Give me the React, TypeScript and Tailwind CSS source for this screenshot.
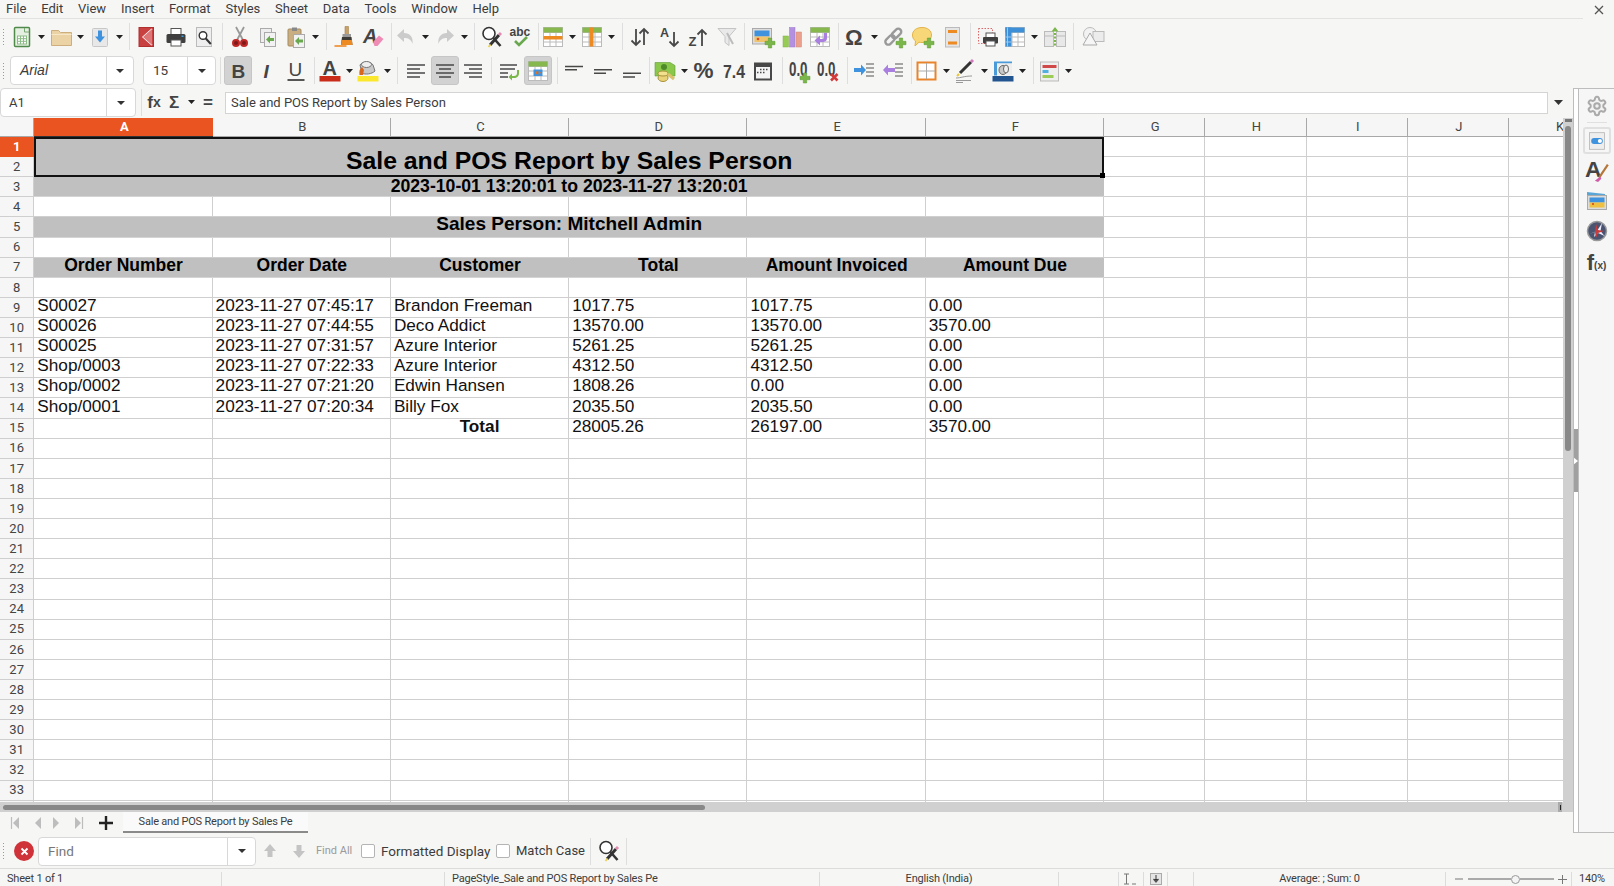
import React from "react";

const Svg = ({ children, s = 24 }: { children: React.ReactNode; s?: number }) => (
  <svg className="overflow-visible" width={s} height={s} viewBox="0 0 24 24" fill="none">{children}</svg>
);
const T = ({ x, y, size, children, fill = "#444", weight = 700, italic, len }: { x: number; y: number; size: number; children: React.ReactNode; fill?: string; weight?: number; italic?: boolean; len?: number }) => (
  <text x={x} y={y} fontSize={size} fill={fill} fontWeight={weight} fontStyle={italic ? "italic" : "normal"} fontFamily="'Liberation Sans', sans-serif" textLength={len} lengthAdjust={len ? "spacingAndGlyphs" : undefined}>{children}</text>
);
const Plus = ({ x = 18, y = 18 }: { x?: number; y?: number }) => (
  <path d={`M${x - 1.7} ${y - 5}h3.4v3.3h3.3v3.4h-3.3v3.3h-3.4v-3.3h-3.3v-3.4h3.3z`} fill="#7ab648" stroke="#5f9a35" strokeWidth=".5" />
);
const GreenArrow = ({ x = 10, y = 15 }: { x?: number; y?: number }) => (
  <path d={`M${x} ${y}l4-4v2.5h4v3h-4v2.5z`} fill="#6aa84f" />
);
const Table = ({ fill = "#fff" }: { fill?: string }) => (
  <>
    <rect x="2.5" y="2.5" width="19" height="19" fill={fill} stroke="#bbb" />
    <path d="M2.5 7.5h19M2.5 12h19M2.5 17h19M9 2.5v19M15 2.5v19" stroke="#bbb" />
  </>
);

const Icons: Record<string, React.ReactNode> = {
  doc: <Svg><rect x="4.5" y="2.5" width="15" height="19" rx="1" fill="#e6f0e2" stroke="#4f8a4a" strokeWidth="1.5" /><path d="M14.5 3v4h4.5" stroke="#7aa874" /><rect x="7.5" y="11" width="9" height="8" fill="#fff" stroke="#8cbb86" /><path d="M7.5 13.7h9M7.5 16.3h9M10.5 11v8M13.5 11v8" stroke="#8cbb86" /></Svg>,
  folder: <Svg><path d="M2.5 5.5h7l2 2h11v13h-20z" fill="#ecd3a6" stroke="#cdae7c" /><path d="M2.5 9.5h20" stroke="#f6e7c8" /></Svg>,
  save: <Svg><rect x="4.5" y="3.5" width="15" height="18" rx="1" fill="#e8e8e8" stroke="#c8c8c8" /><path d="M10 5.5h4v6h3l-5 6-5-6h3z" fill="#3f92dd" /></Svg>,
  pdf: <Svg><rect x="5" y="2.5" width="14.5" height="19" fill="#c94040" stroke="#b03030" /><path d="M18 4L9 12l9 8" stroke="#fff" strokeWidth="1.4" /><path d="M9 12l9-8v16z" fill="#dd7777" /></Svg>,
  print: <Svg><rect x="7" y="3.5" width="10" height="7" fill="#fff" stroke="#555" /><rect x="2.5" y="9" width="19" height="9" rx="1.5" fill="#3f3f3f" /><rect x="7" y="15" width="10" height="6" fill="#fff" stroke="#555" /><rect x="17.5" y="10.5" width="2" height="1.5" fill="#3f9bdc" /></Svg>,
  preview: <Svg><rect x="4.5" y="2.5" width="15" height="19" fill="#eee" stroke="#bbb" /><circle cx="11" cy="10.5" r="3.8" fill="#fff" stroke="#333" strokeWidth="1.4" /><path d="M13.8 13.5l5 5.5" stroke="#333" strokeWidth="2" /></Svg>,
  cut: <Svg><path d="M9 15L16 2M15 15L8 2" stroke="#999" strokeWidth="1.8" /><circle cx="8" cy="18" r="3" fill="#7c1a1a" stroke="#c02828" strokeWidth="2" /><circle cx="16" cy="18" r="3" fill="#7c1a1a" stroke="#c02828" strokeWidth="2" /></Svg>,
  copy: <Svg><rect x="4.5" y="3.5" width="11" height="14" fill="#eee" stroke="#aaa" /><rect x="8.5" y="7.5" width="11" height="14" fill="#f2f2f2" stroke="#aaa" /><GreenArrow x={10} y={14.5} /></Svg>,
  paste: <Svg><rect x="4" y="4" width="13" height="17" rx="1" fill="#c9ae82" stroke="#a58b5f" /><rect x="8" y="2.5" width="5" height="3.5" fill="#888" /><rect x="9.5" y="9.5" width="11" height="13" fill="#f2f2f2" stroke="#aaa" /><GreenArrow x={11} y={16} /></Svg>,
  brush: <Svg><path d="M13 1.5h3.5v8H13z" fill="#c9a26a" stroke="#a5814a" strokeWidth=".6" /><rect x="10.5" y="9" width="8.5" height="3" fill="#999" /><path d="M10 12h9.5l1 8H9z" fill="#3e3a34" /><path d="M9.6 15h10.3l.6 5H9z" fill="#ee8a22" /><path d="M2.5 21h12" stroke="#ee8a22" strokeWidth="1.6" /></Svg>,
  clear: <Svg><T x={3} y={18} size={20} italic>A</T><path d="M13 17l6-6.5 4.5 3.5-6 7h-3z" fill="#ef8cb5" /></Svg>,
  undo: <Svg><path d="M10 4L3 10.5 10 17v-4c4 0 7 1 8.5 6 1-7-2.5-11-8.5-11z" fill="#cbcbcb" /></Svg>,
  redo: <Svg><path d="M14 4l7 6.5-7 6.5v-4c-4 0-7 1-8.5 6-1-7 2.5-11 8.5-11z" fill="#cbcbcb" /></Svg>,
  find: <Svg><circle cx="9" cy="8.5" r="6" fill="#fff" stroke="#333" strokeWidth="1.6" /><path d="M13.5 13l7 8" stroke="#333" strokeWidth="2.5" /><path d="M10 20l9-10" stroke="#333" strokeWidth="3" /><path d="M19 10l2-2" stroke="#e58ab0" strokeWidth="3" /><path d="M8.5 22l2-2.5" stroke="#e9d25c" strokeWidth="2" /></Svg>,
  abc: <Svg><T x={1.5} y={10.5} size={12}>abc</T><path d="M7 16l4 4 8-8" stroke="#6aa84f" strokeWidth="2.6" /></Svg>,
  rows: <Svg><Table /><rect x="2.5" y="2.5" width="19" height="5" fill="#86b84e" /><rect x="2.5" y="11" width="19" height="3.5" fill="#ee8a22" /></Svg>,
  cols: <Svg><Table /><rect x="2.5" y="2.5" width="19" height="5" fill="#86b84e" /><rect x="9.5" y="2.5" width="4" height="19" fill="#ee8a22" /></Svg>,
  sort: <Svg><path d="M8 4v16M3.5 15.500L8 20l4.500-4.500M16 20V4M11.500 8.500L16 4l4.500 4.500" stroke="#484848" strokeWidth="1.8" /></Svg>,
  az: <Svg><T x={1} y={12} size={12.5}>A</T><path d="M15 7v14M10.500 16.500L15 21l4.500-4.500" stroke="#484848" strokeWidth="1.8" /></Svg>,
  za: <Svg><T x={1.5} y={21} size={13}>Z</T><path d="M15 21V5M10.500 9.500L15 5l4.500 4.500" stroke="#484848" strokeWidth="1.8" /></Svg>,
  filter: <Svg><path d="M3 3.500h18l-7 8v9l-4-3v-6z" fill="#e9e9e9" stroke="#c4c4c4" /><path d="M12 8l6 11" stroke="#bcbcbc" strokeWidth="2" /></Svg>,
  image: <Svg><rect x="1.500" y="3.500" width="19" height="15.500" fill="#ddd" stroke="#aaa" /><rect x="3.500" y="5.500" width="15" height="6" fill="#3f92dd" /><rect x="3.500" y="11.500" width="15" height="5.500" fill="#f0c46a" /><circle cx="7" cy="14" r="1.300" fill="#d84a2a" /><Plus x={19} y={18} /></Svg>,
  chart: <Svg><rect x="3" y="11" width="5.500" height="11" fill="#96cc55" stroke="#7fb040" strokeWidth=".5" /><rect x="9.500" y="2.500" width="5.500" height="19.500" fill="#b490e0" stroke="#9a78c8" strokeWidth=".5" /><rect x="16" y="7" width="5.500" height="15" fill="#eaa08c" stroke="#d08874" strokeWidth=".5" /></Svg>,
  pivot: <Svg><Table /><rect x="2.500" y="2.500" width="19" height="5" fill="#86b84e" /><path d="M19 8v5c0 3-2 4-5 4h-2v3.500L6.500 15.500 12 10.500V14h2c1.500 0 2-.5 2-2V8z" fill="#a97fe0" /></Svg>,
  omega: <Svg><T x={2} y={20} size={22}>Ω</T></Svg>,
  link: <Svg><g transform="rotate(-45 11 11)" stroke="#999" strokeWidth="2.400"><rect x="0" y="8" width="11" height="6" rx="3" /><rect x="9" y="8" width="11" height="6" rx="3" /></g><Plus x={18} y={18} /></Svg>,
  comment: <Svg><path d="M11 2.500c5.500 0 9.500 3 9.500 7.500s-4 7.500-9.500 7.500c-1 0-2 0-3-.3L4 21l.5-5C2.500 14.500 1.500 12.500 1.500 10c0-4.500 4-7.500 9.500-7.500z" fill="#f8d778" stroke="#e2b348" /><Plus x={18} y={18} /></Svg>,
  hf: <Svg><rect x="5.500" y="2.500" width="14" height="19.500" fill="#e5e5e5" stroke="#bbb" /><rect x="8" y="5" width="9" height="3" fill="#ee8a22" /><rect x="8" y="16.500" width="9" height="3" fill="#ee8a22" /></Svg>,
  area: <Svg><rect x="1.500" y="3.500" width="14" height="15" fill="#f4f4f4" stroke="#d66" strokeDasharray="1.500 1.500" /><rect x="9" y="8" width="9" height="5" fill="#fff" stroke="#555" /><rect x="6" y="12" width="15" height="6.500" rx="1" fill="#3f3f3f" /><rect x="9" y="16" width="9" height="5" fill="#fff" stroke="#555" /></Svg>,
  freeze: <Svg><Table /><rect x="2.500" y="2.500" width="19" height="5" fill="#3d8fd8" /><rect x="2.500" y="2.500" width="6" height="19" fill="#3d8fd8" /><path d="M2.500 12h6M2.500 17h6M4.500 2.500v19" stroke="#9cc8ee" /></Svg>,
  split: <Svg><rect x="1.500" y="6.500" width="9" height="15" fill="#e8e8e8" stroke="#bbb" /><rect x="13.500" y="6.500" width="9" height="15" fill="#e8e8e8" stroke="#bbb" /><path d="M1.500 11h9M13.500 11h9" stroke="#bbb" /><path d="M12 8v14" stroke="#7ab648" strokeWidth="2" strokeDasharray="2 1.500" /><path d="M12 2l3.500 4.500h-7z" fill="#7ab648" /></Svg>,
  shapes: <Svg><circle cx="9" cy="9" r="6.500" fill="#f2f2f2" stroke="#bbb" /><rect x="12" y="6.500" width="11" height="10" fill="#ececec" stroke="#bbb" /><path d="M9 8l7 12H2z" fill="#f6f6f6" stroke="#aaa" /></Svg>,
  fcolor: <Svg><T x={4.500} y={15.500} size={20}>A</T><rect x="1.500" y="17" width="21" height="5.500" fill="#c92d1a" /></Svg>,
  hl: <Svg><path d="M4 6c2-4 11-4 13 0l2 6c-3 3-10 4-13 2z" fill="#c8c8c8" stroke="#777" /><ellipse cx="10.500" cy="5.500" rx="5" ry="3" fill="#eee" stroke="#777" /><path d="M6 8c-2.500 2-3 4-2.500 8h3.500l1-5z" fill="#d8681e" /><rect x="1.500" y="17" width="21" height="5.500" fill="#fbe82c" /></Svg>,
  left: <Svg><path d="M3 6h18M3 10h13M3 14h18M3 18h13" stroke="#484848" strokeWidth="1.500" /></Svg>,
  center: <Svg><path d="M3 6h18M6 10h12M3 14h18M6 18h12" stroke="#484848" strokeWidth="1.500" /></Svg>,
  right: <Svg><path d="M3 6h18M8 10h13M3 14h18M8 18h13" stroke="#484848" strokeWidth="1.500" /></Svg>,
  wrap: <Svg><path d="M3 6h17M3 10h15M3 14h8M3 18h8" stroke="#484848" strokeWidth="1.500" /><path d="M20 11v3c0 2-1 3-3 3h-2v-2.500L11.500 18l3.500 3.500V19h2c3 0 5-1.500 5-5v-3z" fill="#7ab648" /></Svg>,
  merge: <Svg><Table /><rect x="2.500" y="2.500" width="19" height="5" fill="#86b84e" /><rect x="7.500" y="10.500" width="9" height="6.500" fill="#3f92dd" /><path d="M9 13.700l2.300-2v4zM15 13.700l-2.300-2v4z" fill="#e8701e" /></Svg>,
  vtop: <Svg><path d="M3 7.500h18M3 10.800h12" stroke="#484848" strokeWidth="1.500" /></Svg>,
  vmid: <Svg><path d="M3 10.800h18M3 14.300h12" stroke="#484848" strokeWidth="1.500" /></Svg>,
  vbot: <Svg><path d="M3 14.300h18M3 18h12" stroke="#484848" strokeWidth="1.500" /></Svg>,
  cur: <Svg><path d="M2 3.500h15l5 3v10.500H2z" fill="#8ac84c" stroke="#5f9a35" strokeWidth=".6" /><circle cx="11" cy="8" r="3" fill="#4f8a2a" /><ellipse cx="10" cy="19" rx="5" ry="3.500" fill="#e9d277" stroke="#a8913c" /><ellipse cx="10" cy="14.500" rx="5" ry="2.500" fill="#f2e08e" stroke="#a8913c" /><path d="M15 15l6 5" stroke="#d9c26a" strokeWidth="3" /></Svg>,
  pct: <Svg><T x={-0.500} y={19} size={22.500}>%</T></Svg>,
  num: <Svg><T x={1} y={18.500} size={18} len={22}>7.4</T></Svg>,
  date: <Svg><rect x="3" y="3.500" width="18" height="18" fill="#484848" /><rect x="5" y="8" width="14" height="11.500" fill="#f4f4f4" /><path d="M9 10.500h1.500M12 10.500h1.500M15 10.500h1.500M6 13.500h1.500M9 13.500h1.500M12 13.500h1.500" stroke="#484848" strokeWidth="1.500" /></Svg>,
  decadd: <Svg><T x={3} y={17.200} size={19.500} len={18.500}>0.0</T><Plus x={19} y={19} /></Svg>,
  decdel: <Svg><T x={2} y={17.200} size={19.500} len={18.500}>0.0</T><path d="M16 15l6.500 6.500M22.500 15L16 21.500" stroke="#d33a3a" strokeWidth="2.600" /></Svg>,
  indent: <Svg><path d="M14 5h8M14 9h8M14 13h8M14 17h8" stroke="#555" strokeWidth="1.200" /><path d="M2 9h7V5.500l5 5.500-5 5.500V13H2z" fill="#3f92dd" /></Svg>,
  outdent: <Svg><path d="M14 5h8M14 9h8M14 13h8M14 17h8" stroke="#555" strokeWidth="1.200" /><path d="M14 9H7V5.500L2 11l5 5.500V13h7z" fill="#a97fe0" /></Svg>,
  border: <Svg><rect x="2.500" y="3.500" width="18" height="17" fill="#fff" stroke="#e8842a" strokeWidth="2" /><path d="M11.500 4v16M3 12h17" stroke="#aaa" /></Svg>,
  lstyle: <Svg><path d="M7 14L18 3" stroke="#333" strokeWidth="3" /><path d="M18 3l2-2" stroke="#d57ac0" strokeWidth="3" /><path d="M4 17l2-2" stroke="#e9c63c" strokeWidth="2" /><path d="M3 19c5 0 8-2 16-2M3 21.500h15M3 23.500h7" stroke="#999" /></Svg>,
  lcolor: <Svg><path d="M3 2.500h18v2H6v12H3z" fill="#4a9ada" /><rect x="6" y="4.500" width="15" height="12" fill="#eee" /><ellipse cx="12" cy="11" rx="4" ry="4.500" fill="#c8c8c8" stroke="#666" /><ellipse cx="15" cy="10" rx="2.500" ry="4" fill="#eee" stroke="#666" /><rect x="1.500" y="17" width="21" height="5.500" fill="#22558f" /></Svg>,
  cond: <Svg><rect x="3.500" y="3" width="18" height="19" fill="#eee" stroke="#bbb" /><rect x="5.500" y="6" width="14" height="3" fill="#d04848" /><rect x="5.500" y="11" width="6" height="3" fill="#52b0e0" /><rect x="5.500" y="16" width="11" height="3" fill="#9ccc58" /></Svg>,
};

const Dd = ({ w = "w-[11px]" }: { w?: string }) => (
  <div className={`flex h-[28px] shrink-0 items-center justify-center ${w}`}>
    <svg width="7" height="4" viewBox="0 0 7 4"><path d="M0 0h7L3.500 4z" fill="#222" /></svg>
  </div>
);
const I = ({ n, w = "w-[28px]", on, ml = "" }: { n: string; w?: string; on?: boolean; ml?: string }) => (
  <div className={`flex shrink-0 items-center justify-center ${w} ${ml} ${on ? "h-[29px] rounded-[3px] border border-[#c6c6c6] bg-[#d2d2d2]" : "h-[28px]"}`}>{Icons[n]}</div>
);
const Sep = ({ m }: { m: string }) => <div className={`h-[27px] w-px shrink-0 bg-[#dedede] ${m}`} />;
const Grip = () => <div className="ml-[2px] mr-[3px] h-[18px] w-[3px] shrink-0 bg-[radial-gradient(#9a9a9a_1px,transparent_1px)] bg-[length:3px_3px]" />;
const Combo = ({ w, split, children, cls = "" }: { w: string; split: string; children: React.ReactNode; cls?: string }) => (
  <div className={`flex shrink-0 items-center rounded-[4px] border border-[#d8d8d8] bg-white ${w} ${cls}`}>
    <div className={`flex h-full shrink-0 items-center border-r border-[#d8d8d8] ${split}`}>{children}</div>
    <div className="flex flex-1 items-center justify-center"><svg width="8" height="4" viewBox="0 0 8 4"><path d="M0 0h8L4 4z" fill="#333" /></svg></div>
  </div>
);

const Menu = () => (
  <div className="flex h-[19px] items-center">
    <div className="flex h-full w-[1583px] items-center border-b border-[#e2e2e2] pl-[6px] text-[13px] text-[#3c3c3c]">
      {["File", "Edit", "View", "Insert", "Format", "Styles", "Sheet", "Data", "Tools", "Window", "Help"].map((m) => (
        <span key={m} className="mr-[14.8px]">{m}</span>
      ))}
    </div>
    <div className="flex flex-1 items-center justify-center text-[#444]">
      <svg width="10" height="10" viewBox="0 0 10 10"><path d="M1 1l8 8M9 1l-8 8" stroke="#555" strokeWidth="1.300" /></svg>
    </div>
  </div>
);

const Toolbar1 = () => (
  <div className="flex h-[34px] items-center pt-[1px]">
    <Grip />
    <I n="doc" /><Dd /><I n="folder" /><Dd /><I n="save" /><Dd />
    <Sep m="ml-[4px] mr-[2px]" />
    <I n="pdf" /><I n="print" ml="ml-[2px]" /><I n="preview" />
    <Sep m="ml-[4px] mr-[3px]" />
    <I n="cut" /><I n="copy" /><I n="paste" /><Dd />
    <Sep m="ml-[5px] mr-[3px]" />
    <I n="brush" /><I n="clear" />
    <Sep m="ml-[5px]" />
    <I n="undo" /><Dd /><I n="redo" /><Dd />
    <Sep m="ml-[4px] mr-[3px]" />
    <I n="find" /><I n="abc" />
    <Sep m="ml-[4px]" />
    <I n="rows" /><Dd /><I n="cols" /><Dd />
    <Sep m="ml-[5px] mr-[3px]" />
    <I n="sort" /><I n="az" ml="ml-[3px]" /><I n="za" /><I n="filter" />
    <Sep m="ml-[3px] mr-[4px]" />
    <I n="image" /><I n="chart" ml="ml-[1px]" /><I n="pivot" />
    <Sep m="ml-[4px] mr-[2px]" />
    <I n="omega" /><Dd /><I n="link" ml="ml-[1px]" /><I n="comment" /><I n="hf" ml="ml-[1px]" />
    <Sep m="ml-[4px] mr-[6px]" />
    <I n="area" w="w-[24px]" /><I n="freeze" /><Dd /><I n="split" ml="ml-[1px]" />
    <Sep m="ml-[4px] mr-[5px]" />
    <I n="shapes" />
  </div>
);

const Toolbar2 = () => (
  <div className="flex h-[35px] items-center">
    <Grip />
    <Combo w="w-[124px] h-[29px]" split="w-[96px] pl-[9px]" cls="ml-[2px]"><span className="font-['Liberation_Sans'] text-[14px] italic text-[#3c3c3c]">Arial</span></Combo>
    <Combo w="w-[73px] h-[29px]" split="w-[44px] pl-[9px]" cls="ml-[9px]"><span className="text-[13.5px] text-[#3c3c3c]">15</span></Combo>
    <Sep m="ml-[4px] mr-[3px]" />
    <div className="flex h-[29px] w-[28px] shrink-0 items-center justify-center rounded-[3px] border border-[#c6c6c6] bg-[#d2d2d2]"><Svg><T x={5.500} y={19} size={19}>B</T></Svg></div>
    <div className="ml-[1px] flex h-[28px] w-[28px] shrink-0 items-center justify-center"><Svg><T x={8.500} y={19} size={19} italic>I</T></Svg></div>
    <div className="ml-[1px] flex h-[28px] w-[28px] shrink-0 items-center justify-center"><Svg><T x={4.500} y={17} size={19} weight={400}>U</T><rect x="3.500" y="20" width="17" height="2" fill="#555" /></Svg></div>
    <Sep m="ml-[4px] mr-[1px]" />
    <I n="fcolor" /><Dd w="w-[10px]" /><I n="hl" /><Dd />
    <Sep m="ml-[4px] mr-[4px]" />
    <I n="left" /><I n="center" on ml="ml-[1px]" /><I n="right" />
    <Sep m="ml-[4px] mr-[3px]" />
    <I n="wrap" /><I n="merge" on ml="ml-[1px]" />
    <Sep m="ml-[5px] mr-[2px]" />
    <I n="vtop" /><I n="vmid" ml="ml-[1px]" /><I n="vbot" ml="ml-[1px]" />
    <Sep m="ml-[3px] mr-[1px]" />
    <I n="cur" /><Dd /><I n="pct" ml="ml-[2px]" /><I n="num" /><I n="date" ml="ml-[1px]" />
    <Sep m="ml-[5px] mr-[1px]" />
    <I n="decadd" /><I n="decdel" ml="ml-[1px]" />
    <Sep m="ml-[6px] mr-[2px]" />
    <I n="indent" /><I n="outdent" ml="ml-[1px]" />
    <Sep m="ml-[4px] mr-[1px]" />
    <I n="border" /><Dd w="w-[10px]" /><I n="lstyle" /><Dd w="w-[10px]" /><I n="lcolor" /><Dd />
    <Sep m="ml-[5px] mr-[1px]" />
    <I n="cond" /><Dd />
  </div>
);

const FormulaBar = () => (
  <div className="flex h-[30px] shrink-0 items-start">
    <Combo w="w-[136px] h-[29px]" split="w-[106px] pl-[8px]"><span className="text-[13px] text-[#3c3c3c]">A1</span></Combo>
    <Sep m="ml-[5px] mt-[1px]" />
    <div className="flex h-[29px] w-[24px] items-center justify-center font-['Liberation_Sans'] text-[17px] font-bold text-[#444]">f<span className="text-[14px]">x</span></div>
    <div className="flex h-[29px] w-[16px] items-center justify-center font-['Liberation_Sans'] text-[17px] font-bold text-[#444]">Σ</div>
    <Dd w="w-[18px]" />
    <div className="flex h-[29px] w-[16px] items-center justify-center font-['Liberation_Sans'] text-[17px] font-bold text-[#444]">=</div>
    <div className="ml-[9px] mt-[4px] flex h-[22px] w-[1323px] shrink-0 items-center border border-[#d4d4d4] bg-white pl-[5px] text-[13px] text-[#3c3c3c]">Sale and POS Report by Sales Person</div>
    <div className="flex h-[29px] w-[20px] items-center justify-center"><svg width="9" height="5" viewBox="0 0 9 5"><path d="M0 0h9L4.500 5z" fill="#333" /></svg></div>
  </div>
);

const line = "border-r border-b border-[#cfcfcf]";
const Blank = () => <div className={line} />;
const Blanks = ({ n }: { n: number }) => <>{Array.from({ length: n }).map((_, i) => <Blank key={i} />)}</>;
const RH = ({ n, on }: { n: number; on?: boolean }) => (
  <div className={`flex items-center justify-center border-r border-b text-[13px] ${on ? "border-[#e95420] bg-[#e95420] font-bold text-white" : "border-[#cfcfcf] bg-[#f6f6f6] text-[#444]"}`}>{n}</div>
);
const CH = ({ c, on }: { c: string; on?: boolean }) => (
  <div className={`flex items-center justify-center border-b pl-[2px] text-[13px] ${on ? "border-[#333] bg-[#e95420] font-bold text-white" : "border-r border-[#a8a8a8] bg-[#f6f6f6] text-[#444]"}`}>{c}</div>
);

const Merged = ({ size, children, pb }: { size: string; children: React.ReactNode; pb: string }) => (
  <div className={`col-span-6 flex items-center justify-center border-b border-[#d4d4d4] bg-[#c0c0c0] font-['Liberation_Sans'] font-bold text-black ${size} ${pb}`}>{children}</div>
);
const Cell = ({ children, b }: { children?: React.ReactNode; b?: boolean }) => (
  <div className={`${line} flex items-center pb-[3px] font-['Liberation_Sans'] text-[17.2px] text-[#111] ${b ? "justify-center font-bold" : "pl-[3px]"}`}>{children}</div>
);

const data = [
  ["S00027", "2023-11-27 07:45:17", "Brandon Freeman", "1017.75", "1017.75", "0.00"],
  ["S00026", "2023-11-27 07:44:55", "Deco Addict", "13570.00", "13570.00", "3570.00"],
  ["S00025", "2023-11-27 07:31:57", "Azure Interior", "5261.25", "5261.25", "0.00"],
  ["Shop/0003", "2023-11-27 07:22:33", "Azure Interior", "4312.50", "4312.50", "0.00"],
  ["Shop/0002", "2023-11-27 07:21:20", "Edwin Hansen", "1808.26", "0.00", "0.00"],
  ["Shop/0001", "2023-11-27 07:20:34", "Billy Fox", "2035.50", "2035.50", "0.00"],
];

const Sheet = () => (
  <div className="grid h-full w-[1563px] shrink-0 auto-rows-[20.12px] grid-cols-[34.3px_repeat(6,178.3px)_repeat(5,101.25px)] grid-rows-[19px] overflow-hidden bg-white">
    <div className="border-r border-b border-[#a8a8a8] bg-[#f6f6f6]" />
    {["A", "B", "C", "D", "E", "F", "G", "H", "I", "J", "K"].map((c, i) => <CH key={c} c={c} on={i === 0} />)}

    <RH n={1} on />
    <div className="relative col-span-6 row-span-2 flex items-center justify-center border-2 border-[#111] bg-[#c0c0c0] pt-[7px] font-['Liberation_Sans'] text-[24.8px] font-bold text-black">
      Sale and POS Report by Sales Person
      <div className="absolute -bottom-[3px] -right-[3px] h-[5px] w-[5px] bg-black" />
    </div>
    <Blanks n={5} />
    <RH n={2} /><Blanks n={5} />

    <RH n={3} /><Merged size="text-[17.65px]" pb="pb-[2px]">2023-10-01 13:20:01 to 2023-11-27 13:20:01</Merged><Blanks n={5} />
    <RH n={4} /><Blanks n={11} />
    <RH n={5} /><Merged size="text-[19.05px]" pb="pb-[6px]">Sales Person: Mitchell Admin</Merged><Blanks n={5} />
    <RH n={6} /><Blanks n={11} />
    <RH n={7} />
    {["Order Number", "Order Date", "Customer", "Total", "Amount Invoiced", "Amount Due"].map((h) => (
      <div key={h} className="flex items-center justify-center border-b border-[#d4d4d4] bg-[#c0c0c0] pb-[4px] font-['Liberation_Sans'] text-[17.5px] font-bold text-black">{h}</div>
    ))}
    <Blanks n={5} />
    <RH n={8} /><Blanks n={11} />
    {data.map((r, i) => (
      <React.Fragment key={r[0]}>
        <RH n={9 + i} />
        {r.map((v, j) => <Cell key={j}>{v}</Cell>)}
        <Blanks n={5} />
      </React.Fragment>
    ))}
    <RH n={15} /><Cell /><Cell /><Cell b>Total</Cell><Cell>28005.26</Cell><Cell>26197.00</Cell><Cell>3570.00</Cell><Blanks n={5} />
    {Array.from({ length: 18 }).map((_, i) => (
      <React.Fragment key={i}><RH n={16 + i} /><Blanks n={11} /></React.Fragment>
    ))}
    <div className="border-r border-[#cfcfcf] bg-[#f6f6f6]" /><Blanks n={11} />
  </div>
);

const VScroll = () => (
  <div className="flex w-[10px] shrink-0 flex-col items-center bg-[#d0d0d0]">
    <div className="mt-[1px] h-[3px] w-[7px] bg-[#777]" />
    <div className="mt-[4px] h-[325px] w-[6px] rounded-full bg-[#888]" />
  </div>
);

const HScroll = () => (
  <div className="flex h-[10px] shrink-0 items-center bg-[#d0d0d0] pl-[3px] pr-[11px]">
    <div className="h-[5px] w-[702px] rounded-full bg-[#888]" />
    <div className="ml-auto flex h-[10px] w-[4px] items-center justify-center bg-[#aaa]"><div className="h-[5px] w-px bg-[#222]" /></div>
  </div>
);

const Tri = ({ d, bar }: { d: "l" | "r"; bar?: boolean }) => (
  <svg width="12" height="14" viewBox="0 0 12 14">
    {d === "l" ? <path d="M10 1v12L4 7z" fill="#bdbdbd" /> : <path d="M2 1v12l6-6z" fill="#bdbdbd" />}
    {bar && (d === "l" ? <path d="M2.500 1v12" stroke="#bdbdbd" strokeWidth="1.200" /> : <path d="M9.500 1v12" stroke="#bdbdbd" strokeWidth="1.200" />)}
  </svg>
);

const TabBar = () => (
  <div className="flex h-[21px] shrink-0 items-center">
    <div className="ml-[9px] flex w-[12px] justify-center"><Tri d="l" bar /></div>
    <div className="ml-[10px] flex w-[12px] justify-center"><Tri d="l" /></div>
    <div className="ml-[8px] flex w-[12px] justify-center"><Tri d="r" /></div>
    <div className="ml-[10px] flex w-[12px] justify-center"><Tri d="r" bar /></div>
    <div className="ml-[13px] flex w-[16px] justify-center">
      <svg width="16" height="16" viewBox="0 0 16 16"><path d="M8 1v14M1 8h14" stroke="#222" strokeWidth="2.400" /></svg>
    </div>
    <div className="ml-[9px] flex h-full w-[185px] items-center justify-center border-b-2 border-[#8a8a8a] bg-[#fafafa] pt-[2px] text-[11px] tracking-[-0.2px] text-[#3c3c3c]">Sale and POS Report by Sales Pe</div>
  </div>
);

const Sidebar = () => (
  <div className="flex w-[41px] shrink-0 border-t border-b border-l border-[#bdbdbd]">
    <div className="flex w-[5px] shrink-0 flex-col border-r border-[#bdbdbd] bg-white">
      <div className="h-[340px]" />
      <div className="flex h-[63px] items-center justify-center bg-[#a0a0a0]">
        <svg width="5" height="8" viewBox="0 0 5 8"><path d="M0 0l5 4-5 4z" fill="#fff" /></svg>
      </div>
    </div>
    <div className="flex flex-1 flex-col items-center bg-[#f6f6f6]">
      <div className="mt-[5px] flex h-[24px] items-center justify-center">
        <svg width="22" height="22" viewBox="0 0 24 24" fill="#f2f2f2" stroke="#aaa" strokeWidth="2.200"><path d="M12.220 2h-.44a2 2 0 0 0-2 2v.18a2 2 0 0 1-1 1.730l-.43.250a2 2 0 0 1-2 0l-.150-.080a2 2 0 0 0-2.730.730l-.220.380a2 2 0 0 0 .730 2.730l.150.100a2 2 0 0 1 1 1.720v.510a2 2 0 0 1-1 1.740l-.150.090a2 2 0 0 0-.730 2.730l.220.380a2 2 0 0 0 2.730.730l.150-.080a2 2 0 0 1 2 0l.430.250a2 2 0 0 1 1 1.730V20a2 2 0 0 0 2 2h.440a2 2 0 0 0 2-2v-.180a2 2 0 0 1 1-1.730l.430-.250a2 2 0 0 1 2 0l.150.080a2 2 0 0 0 2.730-.730l.220-.390a2 2 0 0 0-.730-2.730l-.150-.080a2 2 0 0 1-1-1.740v-.500a2 2 0 0 1 1-1.740l.150-.090a2 2 0 0 0 .730-2.730l-.220-.380a2 2 0 0 0-2.730-.730l-.150.080a2 2 0 0 1-2 0l-.430-.250a2 2 0 0 1-1-1.730V4a2 2 0 0 0-2-2z" /><circle cx="12" cy="12" r="3" /></svg>
      </div>
      <div className="mt-[4px] h-px w-[20px] bg-[#e0e0e0]" />
      <div className="mt-[4px] flex h-[27px] w-[28px] items-center justify-center rounded-[3px] border-2 border-[#e0e0e0]">
        <Svg s={20}><rect x="3" y="2" width="18" height="20" fill="#eee" stroke="#b8b8b8" /><rect x="5" y="8.500" width="14" height="7" rx="3.500" fill="#3f92dd" /><circle cx="15.500" cy="12" r="2.500" fill="#fff" /></Svg>
      </div>
      <div className="mt-[2px] flex h-[28px] items-center justify-center">
        <Svg s={26}><T x={1} y={18} size={21}>A</T><path d="M14 19L22 7" stroke="#b5763a" strokeWidth="2" /><path d="M10 22l5-4 1 2-3 3z" fill="#d05aa8" /></Svg>
      </div>
      <div className="mt-[3px] flex h-[28px] items-center justify-center">
        <Svg s={24}><path d="M2 3l18 2v3H2z" fill="#5aa5d8" /><rect x="2.500" y="6.500" width="19" height="14" fill="#ddd" stroke="#aaa" /><rect x="4.500" y="8.500" width="15" height="5" fill="#3f92dd" /><rect x="4.500" y="13.500" width="15" height="5" fill="#f0c040" /><circle cx="8" cy="15" r="1" fill="#d04020" /></Svg>
      </div>
      <div className="mt-[2px] flex h-[28px] items-center justify-center">
        <Svg s={24}><circle cx="12" cy="12" r="9.500" fill="#4a5470" stroke="#999" strokeWidth="1.500" /><path d="M4 15l8-3 5-8-1.500 8 4 5-6.500-3-4 4 1-5z" fill="#eef" /><path d="M11 5l2 6 6 1-6 2-2 5-1-6z" fill="#c83c3c" /></Svg>
      </div>
      <div className="mt-[3px] flex h-[28px] items-center justify-center font-['Liberation_Sans'] text-[#444]">
        <span className="text-[22px] font-bold">f</span><span className="mt-[6px] text-[10px] font-bold">(x)</span>
      </div>
    </div>
  </div>
);

const Check = ({ cls = "" }: { cls?: string }) => <div className={`h-[14px] w-[14px] shrink-0 rounded-[2px] border border-[#b4b4b4] bg-white ${cls}`} />;

const FindBar = () => (
  <div className="flex h-[35px] items-center pt-[1px]">
    <Grip />
    <div className="ml-[6px] flex h-[20px] w-[20px] shrink-0 items-center justify-center rounded-full bg-[#cf3339]">
      <svg width="9" height="9" viewBox="0 0 9 9"><path d="M1.500 1.500l6 6M7.500 1.500l-6 6" stroke="#fff" strokeWidth="1.800" /></svg>
    </div>
    <Combo w="w-[218px] h-[29px]" split="w-[189px] pl-[9px]" cls="ml-[4px]"><span className="text-[13.500px] text-[#777]">Find</span></Combo>
    <svg className="ml-[6px]" width="16" height="16" viewBox="0 0 16 16"><path d="M8 1L2 8h3.500v6h5V8H14z" fill="#c4c4c4" /></svg>
    <svg className="ml-[13px]" width="16" height="16" viewBox="0 0 16 16"><path d="M8 15L2 8h3.500V2h5v6H14z" fill="#c4c4c4" /></svg>
    <span className="ml-[9px] w-[36px] whitespace-nowrap text-[11px] text-[#9a9a9a]">Find All</span>
    <Check cls="ml-[9px]" />
    <span className="ml-[6px] w-[110px] whitespace-nowrap text-[13.500px] text-[#3c3c3c]">Formatted Display</span>
    <Check cls="ml-[5px]" />
    <span className="ml-[6px] w-[68px] whitespace-nowrap text-[13px] text-[#3c3c3c]">Match Case</span>
    <Sep m="ml-[6px]" />
    <div className="ml-[6px] flex w-[24px] justify-center">{Icons.find}</div>
    <Sep m="ml-[5px]" />
  </div>
);

const StatusCell = ({ w, children, cls = "justify-center" }: { w: string; children?: React.ReactNode; cls?: string }) => (
  <div className={`flex h-[14px] shrink-0 items-center border-r border-[#dcdcdc] ${w} ${cls}`}>{children}</div>
);

const StatusBar = () => (
  <div className="flex h-[18px] items-center border-t border-[#dcdcdc] pt-[3px] text-[11px] tracking-[-0.2px] text-[#3c3c3c]">
    <StatusCell w="w-[222px]" cls="pl-[7px]">Sheet 1 of 1</StatusCell>
    <StatusCell w="w-[223px]" />
    <StatusCell w="w-[375px]" cls="pl-[7px]">PageStyle_Sale and POS Report by Sales Pe</StatusCell>
    <StatusCell w="w-[239px]">English (India)</StatusCell>
    <StatusCell w="w-[60px]" />
    <StatusCell w="w-[25px]">
      <svg width="18" height="12" viewBox="0 0 18 12"><path d="M2 1h5M2 11h5M4.500 1v10M10 11h4" stroke="#777" strokeWidth="1" /></svg>
    </StatusCell>
    <StatusCell w="w-[24px]">
      <svg width="12" height="12" viewBox="0 0 12 12"><rect x=".5" y=".5" width="11" height="11" fill="#e4e4e4" stroke="#aaa" /><path d="M6 2v6M3.500 6L6 9l2.500-3" stroke="#555" strokeWidth="1.200" /></svg>
    </StatusCell>
    <StatusCell w="w-[26px]" />
    <StatusCell w="w-[252px]">Average: ; Sum: 0</StatusCell>
    <div className="flex h-[14px] w-[126px] shrink-0 items-center border-r border-[#dcdcdc] pl-[9px]">
      <svg width="8" height="8" viewBox="0 0 8 8"><path d="M0 4h8" stroke="#777" /></svg>
      <div className="ml-[5px] h-[2px] w-[43px] bg-[#aaa]" />
      <div className="h-[9px] w-[9px] shrink-0 rounded-full border border-[#999] bg-[#f4f4f4]" />
      <div className="h-[2px] w-[34px] bg-[#aaa]" />
      <svg className="ml-[4px]" width="9" height="9" viewBox="0 0 9 9"><path d="M0 4.500h9M4.500 0v9" stroke="#777" /></svg>
    </div>
    <div className="flex-1 pl-[7px]">140%</div>
  </div>
);

export default function App() {
  return (
    <div className="flex h-[886px] w-[1614px] flex-col overflow-hidden bg-[#f6f6f5] font-['Roboto',sans-serif]">
      <Menu />
      <Toolbar1 />
      <Toolbar2 />
      <div className="flex h-[745px] shrink-0">
        <div className="flex w-[1573px] shrink-0 flex-col">
          <FormulaBar />
          <div className="flex h-[684px] shrink-0">
            <Sheet />
            <VScroll />
          </div>
          <HScroll />
          <TabBar />
        </div>
        <Sidebar />
      </div>
      <FindBar />
      <StatusBar />
    </div>
  );
}
